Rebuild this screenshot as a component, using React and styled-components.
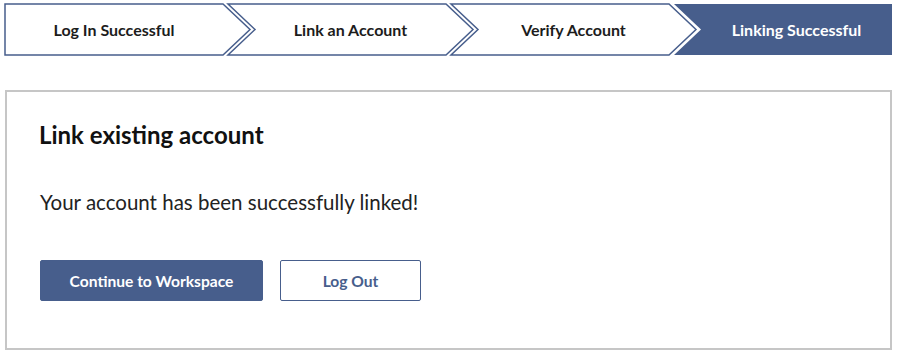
import styled, { createGlobalStyle } from 'styled-components';

const GlobalStyle = createGlobalStyle`
  * {
    box-sizing: border-box;
  }
  body {
    margin: 0;
    background: #ffffff;
    font-family: Lato, "Liberation Sans", sans-serif;
  }
`;

const BRAND = '#475e8c';
const STEP_HEIGHT = 51;
const ARROW = 27;

const Page = styled.div`
  width: 904px;
  padding: 4px 12px 0 5px;
`;

const Stepper = styled.ol`
  display: flex;
  list-style: none;
  margin: 0 0 35px;
  padding: 0;
  height: ${STEP_HEIGHT}px;
`;

const StepItem = styled.li`
  position: relative;
  flex: 0 0 ${(p) => p.$width}px;
  margin-left: ${(p) => (p.$first ? 0 : -22)}px;
  height: 100%;
  display: flex;
  align-items: center;
  justify-content: center;
  padding-left: ${(p) => (p.$first ? 0 : ARROW)}px;
  padding-right: ${(p) => (p.$last ? 0 : ARROW)}px;
`;

const StepShape = styled.svg`
  position: absolute;
  inset: 0;
  width: 100%;
  height: 100%;
  overflow: visible;
`;

const StepLabel = styled.span`
  position: relative;
  font-size: 16px;
  font-weight: 700;
  color: ${(p) => (p.$active ? '#ffffff' : '#1c1c1c')};
  white-space: nowrap;
`;

const Card = styled.section`
  border: 2px solid #c6c6c6;
  padding: 30px 33px 47px 32px;
`;

const Title = styled.h2`
  margin: 0 0 42px;
  font-size: 24px;
  line-height: 26px;
  font-weight: 700;
  color: #111111;
`;

const Message = styled.p`
  margin: 0 0 46px 1px;
  font-size: 20.5px;
  line-height: 24px;
  color: #222222;
`;

const Actions = styled.div`
  display: flex;
  gap: 17px;
  padding-left: 1px;
`;

const Button = styled.button`
  height: 41px;
  width: ${(p) => p.$width}px;
  border-radius: 2px;
  border: 1.5px solid ${BRAND};
  background: ${(p) => (p.$primary ? BRAND : '#ffffff')};
  color: ${(p) => (p.$primary ? '#ffffff' : BRAND)};
  font-family: inherit;
  font-size: 15.6px;
  font-weight: 700;
  cursor: pointer;
`;

const steps = [
  { label: 'Log In Successful', width: 245 },
  { label: 'Link an Account', width: 245 },
  { label: 'Verify Account', width: 245 },
  { label: 'Linking Successful', width: 218, active: true },
];

const shapePoints = (w, h, first, last) => {
  const m = h / 2;
  const pts = [[0, 0]];
  if (last) {
    pts.push([w, 0], [w, h]);
  } else {
    pts.push([w - ARROW, 0], [w, m], [w - ARROW, h]);
  }
  pts.push([0, h]);
  if (!first) pts.push([ARROW, m]);
  return pts.map((p) => p.join(',')).join(' ');
};

const Step = ({ label, width, active, first, last }) => (
  <StepItem $width={width} $first={first} $last={last}>
    <StepShape viewBox={`0 0 ${width} ${STEP_HEIGHT}`} preserveAspectRatio="none">
      <polygon
        points={shapePoints(width, STEP_HEIGHT, first, last)}
        fill={active ? BRAND : '#ffffff'}
        stroke={active ? 'none' : BRAND}
        strokeWidth="1.5"
        strokeLinejoin="miter"
      />
    </StepShape>
    <StepLabel $active={active}>{label}</StepLabel>
  </StepItem>
);

const App = () => {
  return (
    <Page>
      <GlobalStyle />
      <Stepper>
        {steps.map((s, i) => (
          <Step
            key={s.label}
            {...s}
            first={i === 0}
            last={i === steps.length - 1}
          />
        ))}
      </Stepper>
      <Card>
        <Title>Link existing account</Title>
        <Message>Your account has been successfully linked!</Message>
        <Actions>
          <Button type="button" $primary $width={223}>
            Continue to Workspace
          </Button>
          <Button type="button" $width={141}>
            Log Out
          </Button>
        </Actions>
      </Card>
    </Page>
  );
};

export default App;
